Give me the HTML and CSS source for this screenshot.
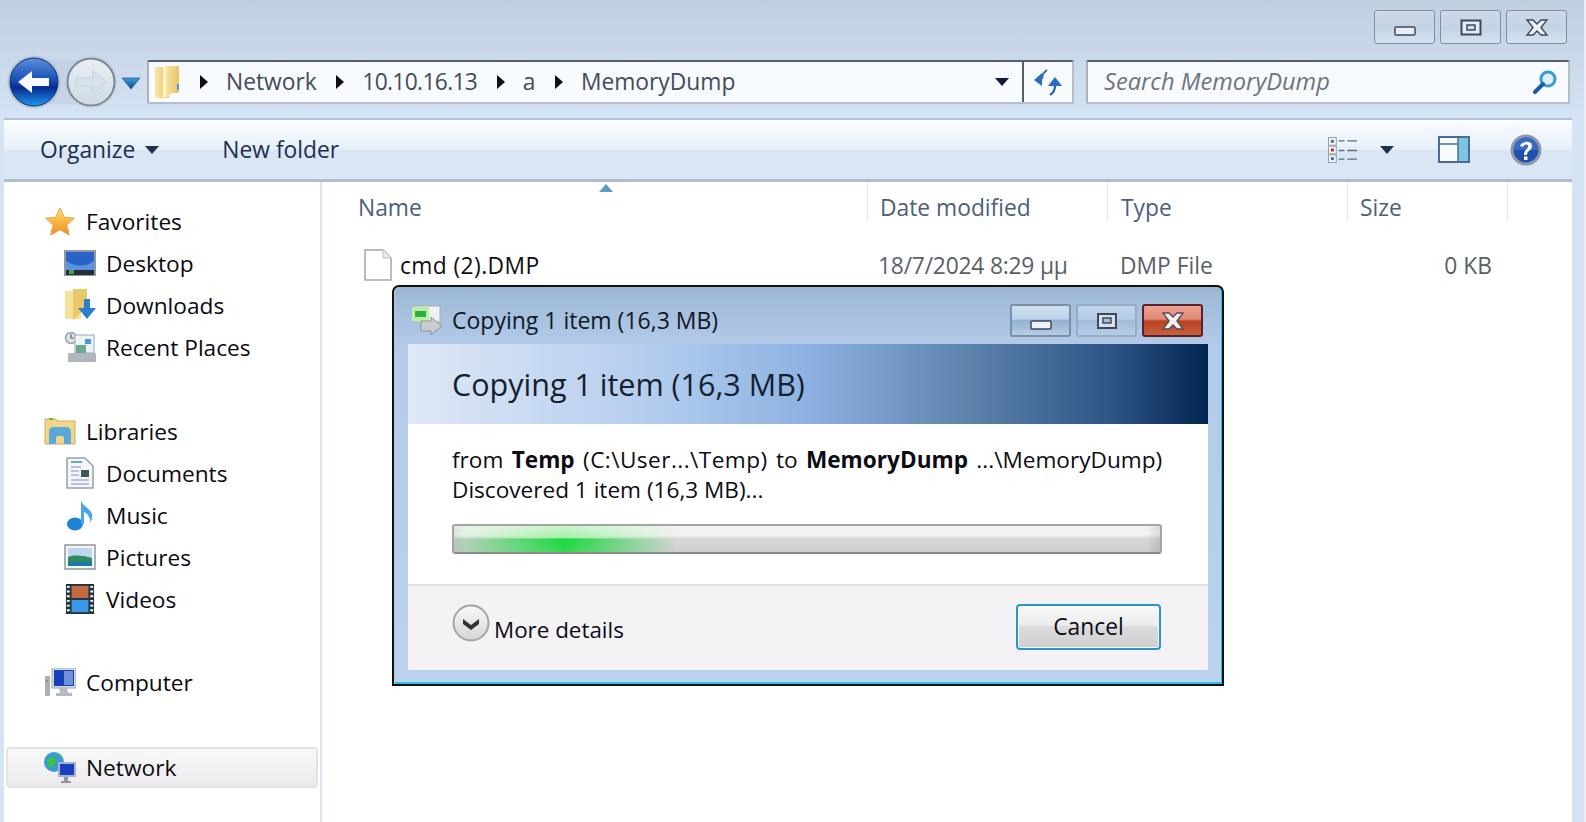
FILE: index.html
```html
<!DOCTYPE html>
<html lang="en">
<head>
<meta charset="utf-8">
<title>MemoryDump</title>
<link rel="stylesheet" href="styles.css">
</head>
<body>
<div class="explorer">
  <header class="chrome">
    <div class="caption-row">
      <div class="capbtn capbtn-min"><svg width="22" height="10" viewBox="0 0 22 10"><rect x="1" y="1" width="20" height="8" rx="1" fill="#e8edf3" stroke="#3c4a5c" stroke-width="1.5"/></svg></div>
      <div class="capbtn capbtn-max"><svg width="22" height="17" viewBox="0 0 22 17"><rect x="1.500" y="1.500" width="19" height="14" fill="#e3eaf3" stroke="#3c4a5c" stroke-width="2"/><rect x="7" y="6" width="8" height="5" fill="#cfdbea" stroke="#3c4a5c" stroke-width="1.5"/></svg></div>
      <div class="capbtn capbtn-close"><svg width="24" height="17" viewBox="0 0 24 17"><path d="M2 1h6l4 4 4-4h6l-6 7.500 6 7.500h-6l-4-4-4 4H2l6-7.500z" fill="#eef2f6" stroke="#3c4a5c" stroke-width="1.4"/></svg></div>
    </div>
    <div class="nav-row">
      <div class="navpair">
        <svg class="navsvg" width="134" height="56" viewBox="0 0 134 56">
          <defs>
            <linearGradient id="blueball" x1="0" y1="0" x2="0" y2="1"><stop offset="0" stop-color="#5a8fd8"/><stop offset="0.45" stop-color="#1a50b8"/><stop offset="0.62" stop-color="#0a2a90"/><stop offset="1" stop-color="#1a98ee"/></linearGradient>
            <linearGradient id="greyball" x1="0" y1="0" x2="0" y2="1"><stop offset="0" stop-color="#e8eef5"/><stop offset="1" stop-color="#cfdae6"/></linearGradient>
            <linearGradient id="navcaret" x1="0" y1="0" x2="0" y2="1"><stop offset="0" stop-color="#3aa0e0"/><stop offset="1" stop-color="#0d4a80"/></linearGradient>
          </defs>
          <rect x="28" y="6" width="60" height="44" rx="10" fill="#bccbdc" opacity=".55"/>
          <circle cx="27" cy="28" r="26.500" fill="#aab8c8" opacity=".6"/>
          <circle cx="84" cy="28" r="26.500" fill="#c4d0dc" opacity=".6"/>
          <circle cx="27" cy="28" r="24" fill="url(#blueball)" stroke="#0c3272" stroke-width="1"/>
          <path d="M11 28 25 17v7h17v8H25v7z" fill="#f7f9fc"/>
          <circle cx="84" cy="28" r="23.500" fill="url(#greyball)" stroke="#7d8894" stroke-width="2"/>
          <path d="M100 28 86 17v7H69v8h17v7z" fill="#d9e3ed" stroke="#c4d0da"/>
          <path d="M115 24h18l-9 11z" fill="url(#navcaret)" stroke="#0d3d70" stroke-width=".6"/>
        </svg>
      </div>
      <div class="addr">
        <svg class="folder-ic" width="26" height="33" viewBox="0 0 26 33"><defs><linearGradient id="fold" x1="0" y1="0" x2="1" y2="0"><stop offset="0" stop-color="#f8e7a4"/><stop offset="1" stop-color="#e6c564"/></linearGradient></defs><path d="M1 1h14v31H4l-3-1z" fill="url(#fold)"/><path d="M11 0h14v27H18l-7 6z" fill="url(#fold)"/><path d="M9 1h3v30H9z" fill="#fdf4cc"/><rect x="23" y="18" width="2" height="6" fill="#4a9ad6"/></svg>
        <span class="crumb-arrow"></span><span class="crumb">Network</span>
        <span class="crumb-arrow"></span><span class="crumb crumb-ip">10.10.16.13</span>
        <span class="crumb-arrow"></span><span class="crumb">a</span>
        <span class="crumb-arrow"></span><span class="crumb">MemoryDump</span>
        <span class="addr-drop"></span>
        <span class="refresh"><svg width="29" height="27" viewBox="0 0 29 27"><path d="M8 10C8 6 10 3 13 1" fill="none" stroke="#2a6dc0" stroke-width="2"/><path d="M0 11l8-7v13z" fill="#2a6dc0"/><path d="M21 17c0 4-2 7-5 9" fill="none" stroke="#1d5aa6" stroke-width="2"/><path d="M21 8l7 9H14z" fill="#2a6dc0"/></svg></span>
      </div>
      <div class="search">
        <span class="search-text">Search MemoryDump</span>
        <svg width="26" height="24" viewBox="0 0 26 24"><circle cx="16" cy="9" r="7" fill="#dff0fb" stroke="#3a9ad9" stroke-width="3"/><path d="M11 14 3 22" stroke="#1d5aa6" stroke-width="4" stroke-linecap="round"/></svg>
      </div>
    </div>
  </header>

  <div class="frame">
    <div class="toolbar">
      <span class="tb-item tb-organize">Organize</span><span class="tb-caret"></span>
      <span class="tb-item tb-new">New folder</span>
      <span class="tb-spacer"></span>
      <svg class="tb-views" width="31" height="26" viewBox="0 0 32 27"><g fill="#f4f7fb" stroke="#8f9cb0"><rect x=".5" y=".5" width="8" height="8"/><rect x=".5" y="9.500" width="8" height="8"/><rect x=".5" y="18.500" width="8" height="8"/></g><rect x="3" y="3" width="3" height="3" fill="#5a6a88"/><rect x="3" y="12" width="3" height="3" fill="#d02020"/><rect x="3" y="21" width="3" height="3" fill="#3a70c0"/><path d="M11 4h6m3 0h10M11 14h6m3 0h10M11 23h6m3 0h10" stroke="#5a6a80" stroke-width="1.500"/></svg>
      <span class="tb-caret tb-caret-views"></span>
      <svg class="tb-pane" width="32" height="27" viewBox="0 0 32 27"><rect x="1" y="1" width="30" height="25" fill="#f8fafc" stroke="#4a6c94" stroke-width="2"/><rect x="20" y="2" width="10" height="23" fill="#7fc4de"/><path d="M2 8h18M20 2v23" stroke="#4a6c94" stroke-width="1.500"/></svg>
      <svg class="tb-help" width="32" height="32" viewBox="0 0 32 32"><circle cx="16" cy="16" r="15.500" fill="#8e98a8"/><circle cx="16" cy="16" r="12.500" fill="#1f50ac"/><path d="M3.500 16a12.500 12.500 0 0 1 25 0z" fill="#4a7ccc" opacity=".6"/><path d="M10 12c1-5 12-6 12 0 0 5-5 4-5 9h-3c0-6 4-5 4-9 0-2-4-2-5 1z" fill="#fff"/><rect x="14" y="22.500" width="3.500" height="3.500" fill="#fff"/></svg>
    </div>

    <div class="panes">
      <nav class="side">
        <div class="side-group">
          <div class="side-item side-head"><svg width="32" height="28" viewBox="0 0 32 30"><defs><linearGradient id="star" x1="0" y1="0" x2="0" y2="1"><stop offset="0" stop-color="#ffe36a"/><stop offset="1" stop-color="#f08a20"/></linearGradient></defs><path d="M16 1l4.500 10 11 1-8.300 7.300L26 30l-10-5.700L6 30l2.800-10.700L.5 12l11-1z" fill="url(#star)" stroke="#f09a40"/></svg><span>Favorites</span></div>
          <div class="side-item"><svg width="32" height="26" viewBox="0 0 32 26"><rect width="32" height="26" fill="#8c9aa8"/><rect x="2" y="2" width="28" height="18" fill="#2a62c8"/><path d="M2 11c10 6 20 6 28 0v9H2z" fill="#5a94e0"/><rect x="2" y="20" width="28" height="5" fill="#2a2e36"/><rect x="5" y="20" width="5" height="4" fill="#48a048"/></svg><span>Desktop</span></div>
          <div class="side-item"><svg width="32" height="32" viewBox="0 0 32 32"><path d="M1 2h16v28H4l-3-1z" fill="#f4e19a"/><path d="M9 0h14v22H18L9 31z" fill="#e8c868"/><path d="M20 10h6v9h6l-9 11-9-11h6z" fill="#2a80cc"/></svg><span>Downloads</span></div>
          <div class="side-item"><svg width="32" height="30" viewBox="0 0 32 30"><circle cx="7" cy="6" r="5.500" fill="#dfe3e8" stroke="#9aa2ac" stroke-width="1.500"/><path d="M7 2v4h3" stroke="#5c6670" fill="none" stroke-width="1.200"/><rect x="11" y="3" width="19" height="18" fill="#eef3f8" stroke="#9aa8b4"/><rect x="21" y="7" width="6" height="5" fill="#4a9ad6"/><rect x="12" y="13" width="10" height="8" fill="#6ea890"/><rect x="4" y="21" width="28" height="9" fill="#b0b6bc"/></svg><span>Recent Places</span></div>
        </div>
        <div class="side-group group-libs">
          <div class="side-item side-head"><svg width="32" height="28" viewBox="0 0 32 28"><path d="M1 2h10l3 2h17v23H1z" fill="#f0d68a" stroke="#cfae58"/><rect x="5" y="1" width="4" height="2" fill="#60c040"/><path d="M5 27V15q0-5 5-5h12q5 0 5 5v12h-7v-6q0-2-2-2h-4q-2 0-2 2v6z" fill="#5aa8d8"/></svg><span>Libraries</span></div>
          <div class="side-item"><svg width="28" height="32" viewBox="0 0 28 32"><path d="M1 1h18l8 8v22H1z" fill="#f4f6fa" stroke="#98a0ac" stroke-width="1.500"/><path d="M5 5h11" stroke="#3f9098" stroke-width="1.500"/><path d="M5 10h10M5 14h8M5 18h8M5 23h18M5 27h18" stroke="#a8b0d8" stroke-width="1.500"/><rect x="15" y="13" width="8" height="7" fill="#3a5a58"/></svg><span>Documents</span></div>
          <div class="side-item"><svg width="28" height="32" viewBox="0 0 28 32"><ellipse cx="9" cy="25" rx="8" ry="6.500" fill="#1f82d4"/><path d="M15 25V1c1 6 9 8 11 14 1 4-1 7-2 8 0-5-2-8-6-10v12z" fill="#4aa6e6"/></svg><span>Music</span></div>
          <div class="side-item"><svg width="32" height="26" viewBox="0 0 32 26"><rect x="1" y="1" width="30" height="24" fill="#f4f6f8" stroke="#8e969e" stroke-width="1.500"/><rect x="4" y="4" width="24" height="18" fill="#bcd8ee"/><path d="M4 13c8-3 16-1 24 1v8H4z" fill="#2f8a60"/><rect x="4" y="18" width="24" height="4" fill="#1d7ab0"/></svg><span>Pictures</span></div>
          <div class="side-item"><svg width="30" height="30" viewBox="0 0 30 32"><rect width="30" height="32" fill="#24343a"/><rect x="6" y="2" width="18" height="13" fill="#c46a40"/><rect x="6" y="17" width="18" height="13" fill="#3a98e8"/><path d="M1 3h3M1 8h3M1 13h3M1 18h3M1 23h3M1 28h3M26 3h3M26 8h3M26 13h3M26 18h3M26 23h3M26 28h3" stroke="#fff" stroke-width="2"/></svg><span>Videos</span></div>
        </div>
        <div class="side-group group-comp">
          <div class="side-item side-head"><svg width="32" height="28" viewBox="0 0 32 28"><rect x="1" y="8" width="5" height="20" fill="#aab0b6"/><rect x="2" y="12" width="2" height="2" fill="#40c040"/><rect x="8" y="0" width="24" height="20" fill="#d4dae0" stroke="#a0a8b0"/><rect x="10" y="2" width="20" height="16" fill="#1440b8"/><rect x="20" y="3" width="9" height="14" fill="#7090d8"/><path d="M15 20h8l1 5h4v3H12v-3h4z" fill="#b4bac0"/></svg><span>Computer</span></div>
        </div>
        <div class="side-item side-head side-selected"><svg width="32" height="32" viewBox="0 0 32 32"><circle cx="10" cy="10" r="10" fill="#3a9ad8"/><path d="M3 8c4-5 8-3 9 0s-3 8-8 7zM12 2c3-1 6 2 6 4z" fill="#3cc050"/><rect x="14" y="10" width="18" height="15" fill="#a8b4c8"/><rect x="16" y="12" width="14" height="11" fill="#1c3ec0"/><rect x="20" y="25" width="4" height="5" fill="#8a96a8"/><rect x="17" y="29" width="10" height="2" fill="#8a96a8"/></svg><span>Network</span></div>
      </nav>

      <main class="files">
        <div class="col-head">
          <span class="sort-mark"></span>
          <div class="col col-name">Name</div>
          <div class="col col-date">Date modified</div>
          <div class="col col-type">Type</div>
          <div class="col col-size">Size</div>
        </div>
        <div class="file-row">
          <div class="cell cell-name"><svg width="28" height="32" viewBox="0 0 28 32"><path d="M1 1h18l8 8v22H1z" fill="#fff" stroke="#a6a6a6" stroke-width="1.500"/><path d="M19 1v8h8" fill="#eee" stroke="#bcbcbc"/></svg><span>cmd (2).DMP</span></div>
          <div class="cell cell-date">18/7/2024 8:29 μμ</div>
          <div class="cell cell-type">DMP File</div>
          <div class="cell cell-size">0 KB</div>
        </div>
      </main>
    </div>
  </div>
</div>

<section class="dialog">
  <div class="dlg-title">
    <svg width="32" height="30" viewBox="0 0 32 30"><rect x="3" y="1" width="26" height="16" fill="#eef2f4" stroke="#a8b0b4"/><rect x="1" y="2" width="17" height="14" fill="#b8f0a8"/><rect x="4" y="6" width="11" height="6" fill="#2cb040"/><path d="M10 16h10v-4l11 9-11 9v-4H10z" fill="#c8cccf" stroke="#8e9498"/></svg>
    <span class="dlg-title-text">Copying 1 item (16,3 MB)</span>
    <span class="dlg-btn dlg-min"><svg width="22" height="10" viewBox="0 0 22 10"><rect x="1" y="1" width="20" height="8" rx="1" fill="#eef1f5" stroke="#3c4a5c" stroke-width="1.500"/></svg></span>
    <span class="dlg-btn dlg-max"><svg width="22" height="18" viewBox="0 0 22 18"><rect x="2" y="2" width="18" height="14" fill="#d6e0ec" stroke="#3c4a5c" stroke-width="2"/><rect x="7" y="6" width="8" height="5" fill="#a9bfd8" stroke="#3c4a5c" stroke-width="1.500"/></svg></span>
    <span class="dlg-btn dlg-close"><svg width="24" height="18" viewBox="0 0 24 18"><path d="M2 1h6l4 4 4-4h6l-6 8 6 8h-6l-4-4-4 4H2l6-8z" fill="#eef2f6" stroke="#5a4a50" stroke-width="1.400"/></svg></span>
  </div>
  <div class="dlg-body">
    <div class="dlg-banner">Copying 1 item (16,3 MB)</div>
    <div class="dlg-main">
      <p class="dlg-line dlg-from">from <b>Temp</b> <span class="dlg-path">(C:\User...\Temp)</span> to <b>MemoryDump</b> ...\MemoryDump)</p>
      <p class="dlg-line">Discovered 1 item (16,3 MB)...</p>
      <div class="progress"><div class="progress-glow"></div></div>
    </div>
    <div class="dlg-foot">
      <span class="more-ic"><svg width="38" height="38" viewBox="0 0 38 38"><defs><linearGradient id="mb" x1="0" y1="0" x2="0" y2="1"><stop offset="0" stop-color="#fafafa"/><stop offset="1" stop-color="#d4d4d4"/></linearGradient></defs><circle cx="19" cy="19" r="17.500" fill="url(#mb)" stroke="#a4a4a4" stroke-width="2"/><path d="M11 15l8 6 8-6v5l-8 6-8-6z" fill="#333"/></svg></span>
      <span class="more-text">More details</span>
      <button class="cancel" type="button">Cancel</button>
    </div>
  </div>
</section>
</body>
</html>
```
FILE: styles.css
```css
* { box-sizing: border-box; }
html, body { margin: 0; height: 100%; }
body {
  width: 1586px;
  height: 822px;
  overflow: hidden;
  position: relative;
  font-family: "Open Sans", "Noto Sans", sans-serif;
  font-size: 16px;
  color: #101010;
  background: #fff;
}
svg { display: block; flex: none; }

.explorer { height: 822px; display: flex; flex-direction: column; border-right: 2px solid #eeeef8; background: linear-gradient(#bfcfe0 0, #d4e4f4 118px); }
.chrome { height: 118px; flex: none; padding: 10px 0 0 0; }
.caption-row { display: flex; justify-content: flex-end; padding-right: 17px; gap: 5px; height: 50px; }
.capbtn { width: 61px; height: 34px; border: 1px solid #7f8fa4; border-radius: 3px; background: linear-gradient(#cfdae8 0, #c4d3e4 50%, #d4e2f0 100%); display: flex; align-items: center; justify-content: center; }
.capbtn-min svg { margin-top: 7px; }

.nav-row { display: flex; align-items: flex-start; height: 44px; padding-left: 7px; }
.navpair { width: 140px; margin-top: -6px; height: 56px; }
.addr { width: 927px; height: 44px; border: 2px solid #55606e; border-bottom-color: #b4bec8; border-left-color: #a8b2bc; border-right-color: #b4bec8; border-radius: 2px; background: #f7fafe; display: flex; align-items: center; padding-left: 5px; color: #444c58; font-size: 22.8px; }
.folder-ic { margin-right: 20px; }
.crumb-arrow { width: 0; height: 0; border-left: 8px solid #111; border-top: 7px solid transparent; border-bottom: 7px solid transparent; margin-right: 18px; flex: none; }
.crumb { margin-right: 19.5px; padding-bottom: 2px; }
.crumb-ip { letter-spacing: -.66px; }
.addr-drop { margin-left: auto; width: 0; height: 0; border-top: 8px solid #111a3c; border-left: 7px solid transparent; border-right: 7px solid transparent; margin-right: 13px; }
.refresh { width: 50px; height: 40px; border-left: 2px solid #55606e; display: flex; align-items: center; justify-content: center; }
.search { margin-left: 12px; width: 484px; height: 44px; border: 2px solid #55606e; border-bottom-color: #b4bec8; border-left-color: #a8b2bc; border-right-color: #b4bec8; border-radius: 2px; background: #f7fafe; display: flex; align-items: center; justify-content: space-between; padding: 0 10px 0 16px; color: #6f747a; font-style: italic; font-size: 23.600px; }
.search-text { padding-bottom: 2px; }

.frame { flex: 1; margin: 0 12px 0 4px; display: flex; flex-direction: column; min-height: 0; background: #fff; }
.toolbar { height: 64px; flex: none; border-top: 2px solid #b4c5d6; border-bottom: 3px solid #aebccc; background: linear-gradient(#fbfdff 0, #e6eff9 50%, #dbe6f4 50%, #dbe6f4 100%); display: flex; align-items: center; padding-left: 36px; color: #1c3050; font-size: 22.8px; }
.tb-caret { width: 0; height: 0; border-top: 8px solid #1c3050; border-left: 7px solid transparent; border-right: 7px solid transparent; margin-left: 10px; }
.tb-new { margin-left: 63px; }
.tb-spacer { flex: 1; }
.tb-caret-views { margin-left: 21px; }
.tb-pane { margin-left: 44px; }
.tb-help { margin-left: 40px; margin-right: 30px; }

.panes { flex: 1; display: flex; min-height: 0; }
.side { width: 318px; border-right: 2px solid #d6e5f5; flex: none; padding: 18px 0 0 3px; }
.side-group { margin-bottom: 42px; }
.side-item { display: flex; align-items: center; gap: 10px; height: 42px; padding-left: 57px; font-size: 22.7px; color: #0a0a10; }
.side-item > svg { width: 32px; }
.side-head { padding-left: 37px; }
.group-libs { margin-bottom: 41px; }
.group-comp { margin-bottom: 44px; }
.side-selected { width: 312px; height: 41px; margin-left: -1px; padding-left: 36px; border: 2px solid #e4e2e6; border-radius: 4px; background: linear-gradient(#f9f8f9 0, #f3f2f3 50%, #ebe9eb 100%); }

.files { flex: 1; position: relative; padding-left: 1px; }
.col-head { display: flex; height: 49px; color: #4c607c; font-size: 22.8px; position: relative; }
.col { padding-top: 8px; padding-left: 12px; border-right: 1px solid #e0e8f2; height: 38px; line-height: 36px; }
.col-name { width: 545px; padding-left: 35px; }
.col-date { width: 240px; }
.col-type { width: 240px; padding-left: 13px; }
.col-size { width: 160px; }
.sort-mark { position: absolute; left: 276px; top: 2px; width: 0; height: 0; border-bottom: 8px solid #5a9ac8; border-left: 7px solid transparent; border-right: 7px solid transparent; }
.file-row { display: flex; align-items: center; height: 38px; margin-top: 15px; font-size: 22.8px; color: #5a6068; }
.cell { flex: none; }
.cell-name { width: 555px; display: flex; align-items: center; gap: 8px; padding-left: 41px; color: #101014; letter-spacing: .4px; }
.cell-date { width: 242px; letter-spacing: -.2px; }
.cell-type { width: 240px; }
.cell-size { width: 132px; text-align: right; }

.dialog { position: absolute; left: 392px; top: 285px; width: 832px; height: 401px; border: 2px solid #111; border-radius: 7px 7px 0 0; background: linear-gradient(#9cb7d4 0, #b3cbe8 60px, #bcd2ee 100%); box-shadow: inset 1px 0 0 #a6d0e8, inset -1px 0 0 #30c0e8, inset 0 -2px 0 0 #30c0e8; padding: 0 14px 14px; display: flex; flex-direction: column; }
.dlg-title { height: 57px; flex: none; display: flex; align-items: center; padding: 9px 0 0 3px; color: #101828; font-size: 23px; position: relative; }
.dlg-title-text { margin-left: 9px; }
.dlg-btn { position: absolute; top: 17px; width: 61px; height: 33px; border-radius: 3px; display: flex; align-items: center; justify-content: center; border: 2px solid #7b8fa8; background: linear-gradient(#d0e0f0 0, #bcd2ea 45%, #94b0cc 50%, #b6cde6 100%); }
.dlg-min { left: 602px; }
.dlg-min svg { margin-top: 8px; }
.dlg-max { left: 668px; border-color: #98acc4; background: linear-gradient(#c0d4ec 0, #b6cde8 45%, #a2bcd8 50%, #b6cde6 100%); }
.dlg-close { left: 734px; border-color: #5a2028; background: linear-gradient(#eda090 0, #e08a78 45%, #b84020 52%, #c86040 100%); }

.dlg-body { flex: 1; display: flex; flex-direction: column; background: #fff; min-height: 0; }
.dlg-banner { height: 80px; flex: none; padding-left: 44px; display: flex; align-items: center; font-size: 30.5px; color: #151f2e; background: linear-gradient(90deg, #dfe8f7 0, #b4cdee 30%, #8db2e2 50%, #5c84ad 70%, #2d5585 88%, #002650 100%); }
.dlg-main { height: 160px; flex: none; padding: 21px 0 0 44px; font-size: 22.6px; color: #0c0c14; }
.dlg-line { margin: 0; line-height: 30px; width: 712px; white-space: nowrap; overflow: hidden; }
.dlg-from { word-spacing: 2.5px; }
.dlg-path { letter-spacing: .45px; }
.progress { margin-top: 19px; width: 710px; height: 30px; border: 2px solid #a4a4a4; border-bottom-color: #8a8a8a; border-radius: 3px; background: linear-gradient(90deg, rgba(0,0,0,.06) 0, transparent 12px, transparent calc(100% - 14px), rgba(0,0,0,.1) 100%), linear-gradient(#f2f2f2 0, #f2f2f2 35%, #d6d6d6 50%, #cfcfcf 100%); position: relative; overflow: hidden; }
.progress-glow { position: absolute; left: 0; top: 0; bottom: 0; width: 222px; background: linear-gradient(#c8f6c8 0, #a4f0a8 45%, #14d83c 50%, #30d850 100%); -webkit-mask-image: linear-gradient(90deg, rgba(0,0,0,.1) 0, #000 50%, rgba(0,0,0,0) 100%); mask-image: linear-gradient(90deg, rgba(0,0,0,.1) 0, #000 50%, rgba(0,0,0,0) 100%); }
.dlg-foot { flex: 1; border-top: 2px solid #e0dfe4; background: #f5f2f6; display: flex; align-items: flex-start; padding: 18px 47px 0 44px; position: relative; }
.more-ic { flex: none; }
.more-text { font-size: 22.4px; color: #0c0c14; margin-left: 4px; margin-top: 11px; line-height: 30px; }
.cancel { margin-left: auto; width: 145px; height: 46px; border: 2px solid #2a94d0; border-radius: 4px; background: linear-gradient(#f8f8f8 0, #ececec 45%, #dcdcdc 50%, #cfcfcf 100%); box-shadow: inset 0 0 0 1px #f4fbff; font: inherit; font-size: 22.8px; color: #0c0c14; padding: 0 0 1px; }
```
